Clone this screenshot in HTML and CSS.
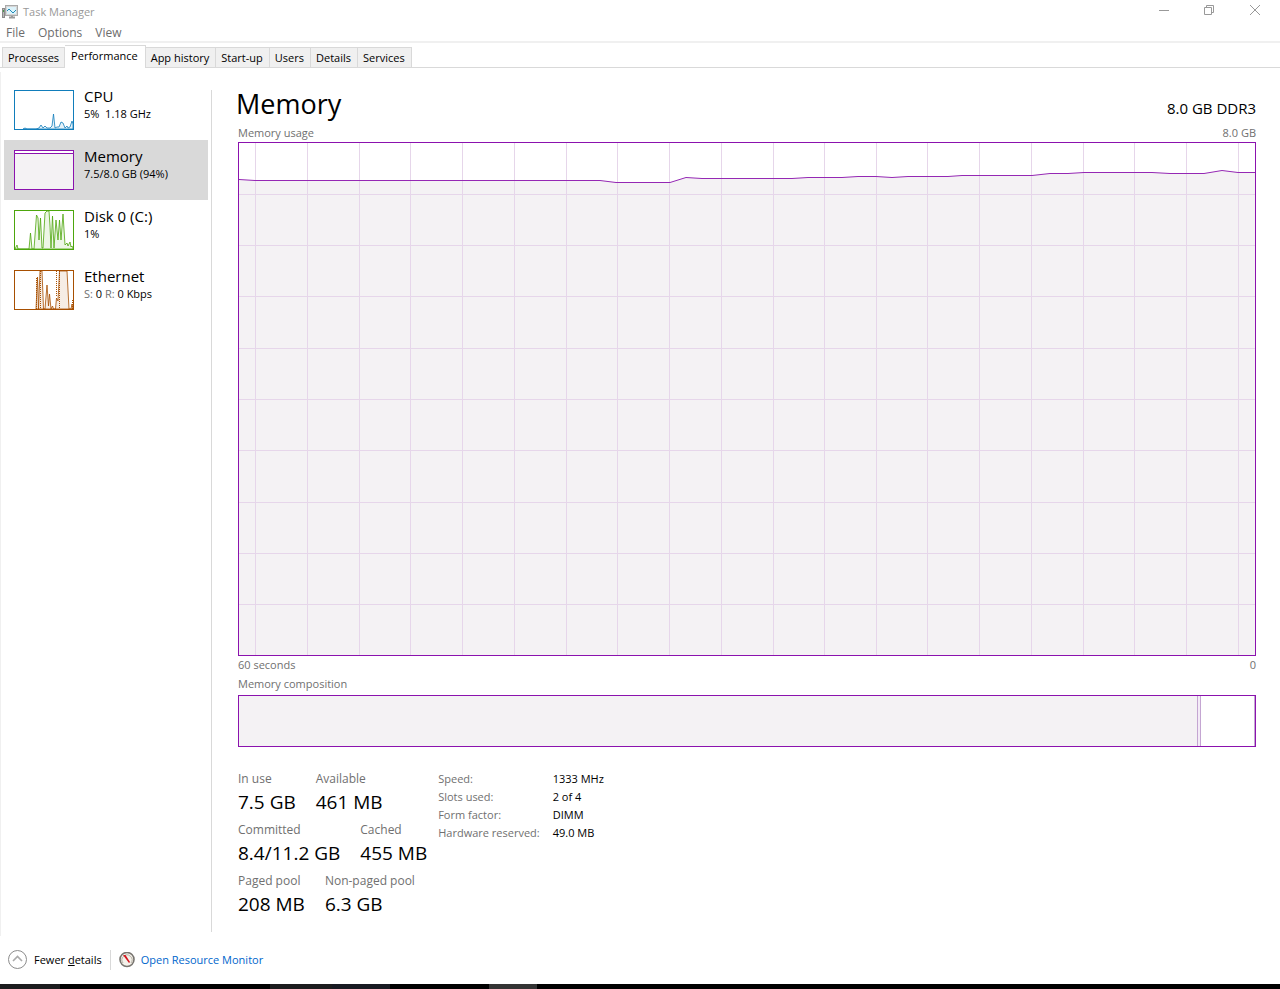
FILE: index.html
```
<!DOCTYPE html>
<html lang="en">
  <head>
    <meta charset="UTF-8" />
    <meta name="viewport" content="width=device-width, initial-scale=1" />
    <title>Task Manager</title>
    <link rel="stylesheet" href="styles.css">
  </head>
  <body>
    <header class="titlebar">
      <svg class="app-icon" width="16" height="16" viewBox="0 0 16 16" aria-hidden="true">
        <rect x="0.5" y="4.5" width="2" height="9" fill="#b8b8b8" stroke="#8a8a8a" />
        <path d="M1 6h1v2h-1z" fill="#4a9a4a" />
        <rect x="3.5" y="1.5" width="12" height="10" fill="#ddf3fb" stroke="#aaa" />
        <rect x="4.5" y="2.5" width="10" height="8" fill="none" stroke="#d6d6d6" />
        <path d="M5 7l2-2 2 2 2 2 3-3" fill="none" stroke="#218cb8" />
        <path d="M10 12v1M7 13.500h6" stroke="#9a9a9a" stroke-width="2" />
      </svg>
      <h1 class="title">Task Manager</h1>
      <div class="window-buttons">
        <button class="window-btn" aria-label="Minimize">
          <svg width="12" height="12" viewBox="0 0 12 12"><path d="M2 6.5h10" /></svg>
        </button>
        <button class="window-btn" aria-label="Restore">
          <svg width="12" height="12" viewBox="0 0 12 12"><path d="M1.5 3.5h7v7h-7zM3.5 3.5v-2h7v7h-2" /></svg>
        </button>
        <button class="window-btn" aria-label="Close">
          <svg width="12" height="12" viewBox="0 0 12 12"><path d="M1 1l10 10M11 1l-10 10" /></svg>
        </button>
      </div>
    </header>

    <nav class="menu">
      <button class="menu-item">File</button>
      <button class="menu-item">Options</button>
      <button class="menu-item">View</button>
    </nav>

    <div class="tabs" role="tablist">
      <button class="tab" role="tab">Processes</button>
      <button class="tab active" role="tab" aria-selected="true">Performance</button>
      <button class="tab" role="tab">App history</button>
      <button class="tab" role="tab">Start-up</button>
      <button class="tab" role="tab">Users</button>
      <button class="tab" role="tab">Details</button>
      <button class="tab" role="tab">Services</button>
    </div>

    <div class="content">
      <aside class="sidebar">
        <button class="resource">
          <svg class="thumb cpu" width="60" height="40" viewBox="0 0 60 40">
            <path class="area" d="M9 39L11 38L13 39H22L25 38L27 35L29 38L31 36L33 38H36L38 36L39.500 24L41 38L43 37H45L47 32L49 33L51 38L53 36L54 38L56 37L58 31L59 34V39Z" />
            <rect class="frame" x="0.5" y="0.5" width="59" height="39" />
          </svg>
          <span class="resource-text">
            <span class="resource-name">CPU</span>
            <span class="resource-value">5%&nbsp; 1.18 GHz</span>
          </span>
        </button>
        <button class="resource selected">
          <svg class="thumb memory" width="60" height="40" viewBox="0 0 60 40">
            <rect class="frame" x="0.5" y="0.5" width="59" height="39" />
            <path class="level" d="M0.5 3.5h59v36h-59z" />
          </svg>
          <span class="resource-text">
            <span class="resource-name">Memory</span>
            <span class="resource-value">7.5/8.0 GB (94%)</span>
          </span>
        </button>
        <button class="resource">
          <svg class="thumb disk" width="60" height="40" viewBox="0 0 60 40">
            <path class="area" d="M1 39L3 35L4 39H15L16.500 23L18 39H20L22.500 5L24 8L25 30L26.500 8L28 38L29 38L31 3L33 1H35L36 16L37 38L38.500 6L40 38L42 10L44 30L45.500 10L47 30L49 4L51 35L53 33L54 36L56 32L57 37L58 36L59 38V39Z" />
            <rect class="frame" x="0.5" y="0.5" width="59" height="39" />
          </svg>
          <span class="resource-text">
            <span class="resource-name">Disk 0 (C:)</span>
            <span class="resource-value">1%</span>
          </span>
        </button>
        <button class="resource">
          <svg class="thumb ethernet" width="60" height="40" viewBox="0 0 60 40">
            <path class="area" d="M22 39L23.500 7L24.500 39L26 1H28L29.500 39H31L33 15L34.500 36L35.500 24L37 39L38.500 36L39.500 39H41.500L42.500 28L44 31L45.500 1H53L55 39H57L58 34L59 39Z" />
            <path class="dotted" d="M22.500 8v31M26.500 1v38M42.500 1v26M45.500 1v38M58.500 30v9" />
            <rect class="frame" x="0.5" y="0.5" width="59" height="39" />
          </svg>
          <span class="resource-text">
            <span class="resource-name">Ethernet</span>
            <span class="resource-value"><span class="dim">S:</span> 0 <span class="dim">R:</span> 0 Kbps</span>
          </span>
        </button>
      </aside>

      <main class="details">
        <div class="heading">
          <h2 class="heading-name">Memory</h2>
          <span class="heading-type">8.0 GB DDR3</span>
        </div>
        <div class="caption"><span>Memory usage</span><span>8.0 GB</span></div>
        <div class="usage">
          <svg class="usage-graph" viewBox="0 0 1016 512" preserveAspectRatio="none">
            <path class="usage-fill" d="M0 36.5L16 37.5H361L377 39.5H431L447 34.5L463 35.5H553L569 34.5H603L619 33.5H637L653 34.5L669 33.5H709L723 32.5H793L811 30.5H829L845 29.5H913L931 30.5H965L983 27.5L999 29.5H1016V512H0Z" />
            <path class="usage-grid" d="M16.5 0v512M68.5 0v512M120.5 0v512M171.5 0v512M223.5 0v512M275.5 0v512M327.5 0v512M378.5 0v512M430.5 0v512M482.5 0v512M534.5 0v512M585.5 0v512M637.5 0v512M688.5 0v512M740.5 0v512M792.5 0v512M844.5 0v512M895.5 0v512M947.5 0v512M999.5 0v512" />
            <path class="usage-grid" d="M0 51.5h1016M0 102.5h1016M0 153.5h1016M0 205.5h1016M0 256.5h1016M0 307.5h1016M0 359.5h1016M0 410.5h1016M0 461.5h1016" />
            <path class="usage-line" d="M0 36.5L16 37.5H361L377 39.5H431L447 34.5L463 35.5H553L569 34.5H603L619 33.5H637L653 34.5L669 33.5H709L723 32.5H793L811 30.5H829L845 29.5H913L931 30.5H965L983 27.5L999 29.5H1016" />
          </svg>
        </div>
        <div class="caption"><span>60 seconds</span><span>0</span></div>
        <div class="caption"><span>Memory composition</span></div>
        <div class="composition">
          <div class="in-use"></div>
          <div class="modified"></div>
          <div class="standby"></div>
          <div class="free"></div>
        </div>

        <div class="stats">
          <div class="stat-rows">
            <dl class="stat-row">
              <div><dt>In use</dt><dd>7.5 GB</dd></div>
              <div><dt>Available</dt><dd>461 MB</dd></div>
            </dl>
            <dl class="stat-row">
              <div><dt>Committed</dt><dd>8.4/11.2 GB</dd></div>
              <div><dt>Cached</dt><dd>455 MB</dd></div>
            </dl>
            <dl class="stat-row">
              <div><dt>Paged pool</dt><dd>208 MB</dd></div>
              <div><dt>Non-paged pool</dt><dd>6.3 GB</dd></div>
            </dl>
          </div>
          <table class="hardware">
            <tr><th scope="row">Speed:</th><td>1333 MHz</td></tr>
            <tr><th scope="row">Slots used:</th><td>2 of 4</td></tr>
            <tr><th scope="row">Form factor:</th><td>DIMM</td></tr>
            <tr><th scope="row">Hardware reserved:</th><td>49.0 MB</td></tr>
          </table>
        </div>
      </main>
    </div>

    <footer class="footer">
      <button class="fewer">
        <svg width="20" height="20" viewBox="0 0 20 20" fill="none">
          <circle cx="9.500" cy="9.500" r="9" stroke="#8c8c8c" />
          <path d="M5 11L9.500 6.500l4.500 4.500" stroke="#aaa" stroke-width="1.600" />
        </svg>
        <span>Fewer <u>d</u>etails</span>
      </button>
      <a class="monitor" href="#">
        <svg width="16" height="16" viewBox="0 0 16 16">
          <circle cx="8" cy="7.500" r="7" fill="#f4f1ea" stroke="#77746f" stroke-width="1.600" />
          <path d="M4 11a5 5 0 1 1 8 0" fill="none" stroke="#b5b0a4" />
          <path d="M4 3l2.500 0 4.500 7-1 1z" fill="#d3121c" />
        </svg>
        <span>Open Resource Monitor</span>
      </a>
    </footer>
    <div class="taskbar"></div>
  </body>
</html>
```
FILE: styles.css
```
* {
  box-sizing: border-box;
}
body {
  margin: 0;
  height: 100vh;
  display: flex;
  flex-direction: column;
  overflow: hidden;
  background: #fff;
  color: #000;
  font-family: "Open Sans", "Segoe UI", sans-serif;
  font-size: 11px;
  line-height: 18px;
}
button {
  margin: 0;
  padding: 0;
  border: none;
  background: none;
  color: inherit;
  font: inherit;
  text-align: left;
}
h1,
h2,
dl,
dd {
  margin: 0;
  font-weight: normal;
}

/* Title bar and menu */
.titlebar {
  display: flex;
  align-items: center;
  height: 24px;
  padding-left: 2px;
}
.title {
  margin-left: 5px;
  color: #999;
  font-size: 11px;
}
.window-buttons {
  display: flex;
  height: 20px;
  margin: 0 2px 4px auto;
}
.window-btn {
  display: flex;
  align-items: center;
  justify-content: center;
  width: 46px;
}
.window-btn svg {
  fill: none;
  stroke: #999;
}
.menu {
  display: flex;
  gap: 13px;
  height: 19px;
  padding-left: 6px;
  border-bottom: 2px solid #f0f0f0;
  color: #6d6d6d;
  font-size: 12px;
}

/* Tabs */
.tabs {
  display: flex;
  align-items: flex-end;
  height: 25px;
  padding-left: 2px;
  border-bottom: 1px solid #d9d9d9;
}
.tab {
  height: 20px;
  padding: 0 6px 0 5px;
  border: 1px solid #d9d9d9;
  border-width: 1px 1px 0 0;
  background: #f0f0f0;
}
.tab:first-child {
  padding-right: 5px;
  border-left-width: 1px;
}
.tab.active {
  height: 23px;
  margin-bottom: -1px;
  padding: 0 7px 2px 6px;
  background: #fff;
}

/* Resource list */
.content {
  display: flex;
  flex: 1;
  min-height: 0;
  margin-top: 4px;
  border-left: 1px solid #f0f0f0;
}
.sidebar {
  width: 211px;
  margin: 18px 0 4px;
  border-right: 1px solid #d9d9d9;
}
.resource {
  display: flex;
  gap: 10px;
  width: 204px;
  height: 60px;
  margin-left: 3px;
  padding: 10px;
}
.resource:first-child {
  height: 50px;
  padding-top: 0;
}
.resource.selected {
  background: #d9d9d9;
}
.thumb {
  flex: none;
}
.frame,
.area,
.level {
  stroke: currentColor;
}
.frame {
  fill: none;
}
.area {
  stroke-opacity: 0.8;
  fill: currentColor;
  fill-opacity: 0.1;
}
.level {
  fill: #f4f2f4;
}
.dotted {
  stroke: currentColor;
  stroke-dasharray: 1 1;
}
.cpu {
  color: #117dbb;
}
.memory {
  color: #8b12ae;
}
.memory .frame {
  fill: #fff;
}
.disk {
  color: #4da60c;
}
.ethernet {
  color: #a74f01;
}
.resource-text {
  display: flex;
  flex-direction: column;
  white-space: nowrap;
}
.resource-name {
  font-size: 15px;
  line-height: 12px;
}
.resource-value {
  line-height: 24px;
}
.dim {
  color: #707070;
}

/* Memory page */
.details {
  display: flex;
  flex: 1;
  flex-direction: column;
  min-width: 0;
  padding: 18px 24px 13px 26px;
}
.heading {
  display: flex;
  align-items: flex-end;
  justify-content: space-between;
  height: 34px;
}
.heading-name {
  margin-left: -2px;
  font-size: 27px;
  line-height: 40px;
}
.heading-type {
  font-size: 15px;
  line-height: 32px;
}
.caption {
  display: flex;
  justify-content: space-between;
  color: #707070;
}
.usage {
  display: flex;
  flex: 1;
  min-height: 0;
  border: 1px solid #8b12ae;
}
.usage-graph {
  width: 100%;
  height: 100%;
}
.usage-fill {
  fill: #f4f2f4;
}
.usage-grid,
.usage-line {
  fill: none;
  stroke: #e6d6ea;
  vector-effect: non-scaling-stroke;
}
.usage-line {
  stroke: #9528b4;
}
.usage + .caption {
  margin-bottom: 1px;
}
.composition {
  display: flex;
  height: 52px;
  margin-top: 2px;
  border: 1px solid #8b12ae;
}
.in-use {
  flex: 958;
  background: #f4f2f4;
}
.modified {
  width: 4px;
  border: 1px solid #c4a6d2;
  border-width: 0 1px;
  background: #f4ecf7;
}
.standby {
  flex: 53;
}
.free {
  width: 1px;
  background: #c4a6d2;
}

/* Numbers below the graphs */
.stats {
  display: flex;
  gap: 11px;
  margin-top: 23px;
}
.stat-row {
  display: flex;
  gap: 20px;
  height: 51px;
}
.stat-row dt {
  color: #707070;
  font-size: 12px;
}
.stat-row dd {
  font-size: 19px;
  line-height: 28px;
}
.hardware {
  align-self: flex-start;
  border-collapse: collapse;
}
.hardware th,
.hardware td {
  padding: 0;
  font-weight: normal;
  text-align: left;
}
.hardware th {
  padding-right: 13px;
  color: #707070;
}

/* Footer */
.footer {
  display: flex;
  align-items: center;
  height: 48px;
  padding-left: 8px;
}
.fewer,
.monitor {
  display: flex;
  align-items: center;
  gap: 6px;
}
.fewer {
  padding-right: 8px;
  border-right: 1px solid #d9d9d9;
}
.monitor {
  margin-left: 8px;
  color: #0066cc;
  text-decoration: none;
}
.taskbar {
  height: 5px;
  background: linear-gradient(90deg, #1c1c1e 60px, #000 60px 270px, #1c1c1e 270px 332px, #181a22 332px 390px, #000 390px 489px, #333 489px 537px, #000 537px);
}
```
